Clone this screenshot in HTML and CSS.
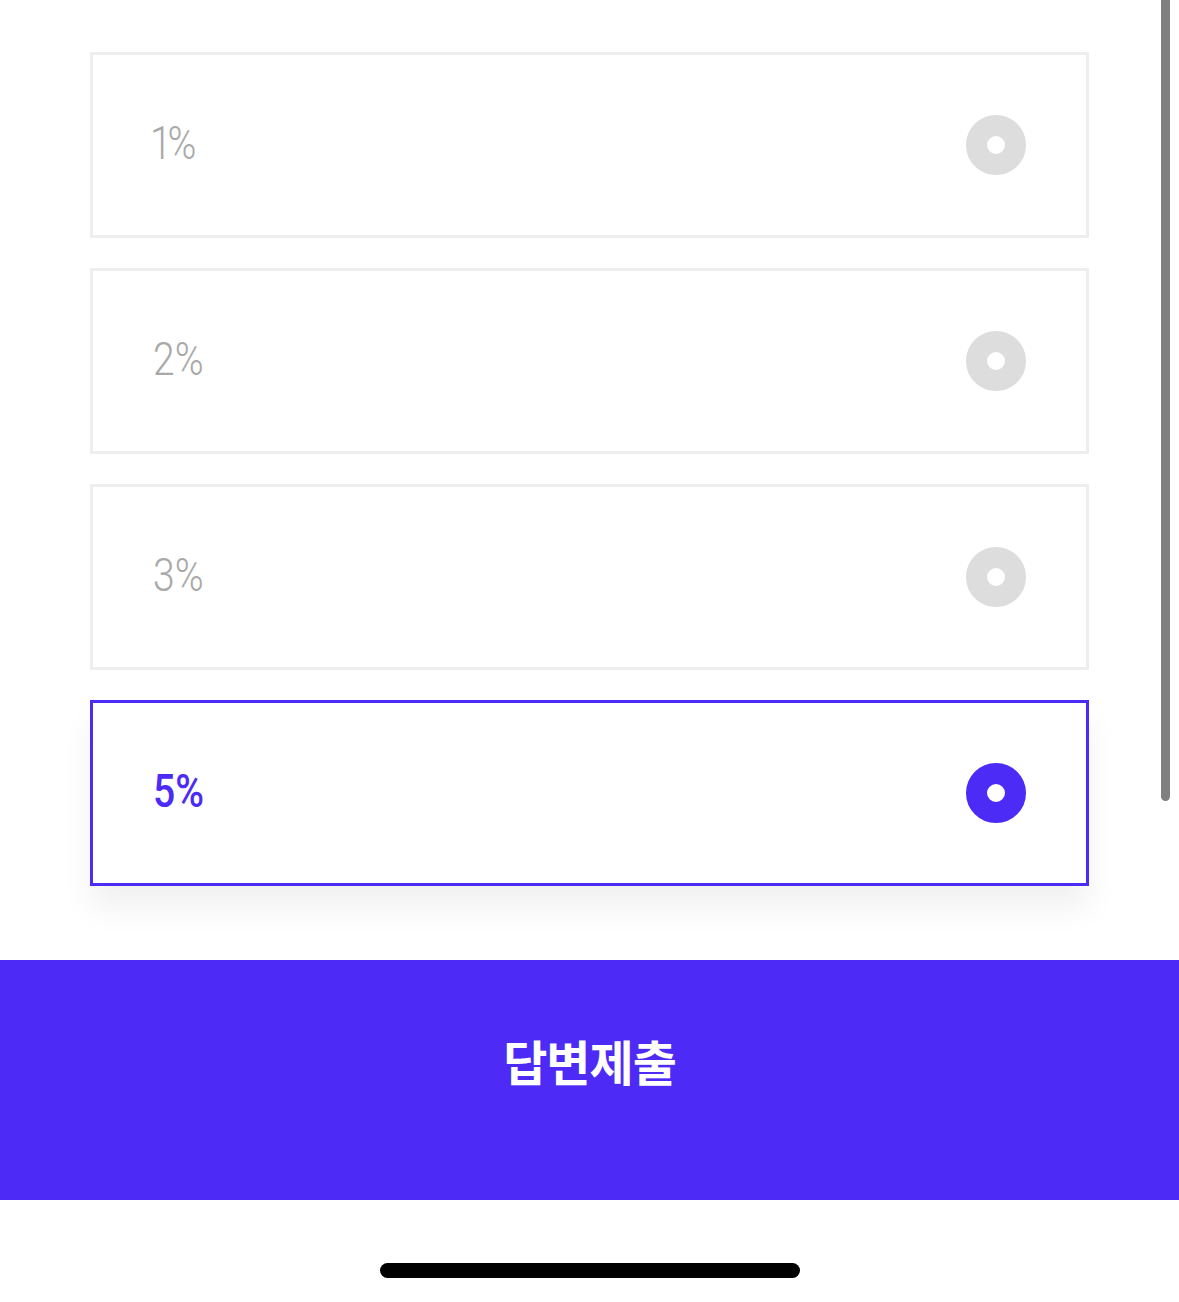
FILE: index.html
```html
<!DOCTYPE html>
<html lang="ko">
<head>
<meta charset="utf-8">
<link rel="stylesheet" href="styles.css">
</head>
<body>
<div class="screen">
  <div class="options">
    <div class="option"><span class="label label-one">1%</span><span class="radio"></span></div>
    <div class="option"><span class="label">2%</span><span class="radio"></span></div>
    <div class="option"><span class="label">3%</span><span class="radio"></span></div>
    <div class="option selected"><span class="label">5%</span><span class="radio"></span></div>
  </div>
  <div class="submit"><span class="submit-text">답변제출</span></div>
  <div class="home-area"><div class="home-indicator"></div></div>
  <div class="scrollbar"></div>
</div>
</body>
</html>
```
FILE: styles.css
```css
html, body {
  margin: 0;
  padding: 0;
  background: #ffffff;
}
.screen {
  position: relative;
  width: 1179px;
  height: 1302px;
  overflow: hidden;
  font-family: Roboto, "Noto Sans", sans-serif;
}
.options {
  display: flex;
  flex-direction: column;
  gap: 30px;
  padding: 52px 0 0 90px;
  width: 999px;
}
.option {
  box-sizing: border-box;
  height: 186px;
  border: 3px solid #eeeeee;
  background: #ffffff;
  display: flex;
  align-items: center;
  justify-content: space-between;
  padding: 0 60px 0 60px;
}
.label {
  display: inline-block;
  font-size: 46px;
  font-weight: 300;
  color: #a9a9a9;
  transform: scaleX(0.85);
  transform-origin: left center;
  line-height: 1;
  margin-top: -4px;
}
.label-one {
  letter-spacing: -5px;
  margin-left: -3px;
}
.radio {
  box-sizing: border-box;
  width: 60px;
  height: 60px;
  border-radius: 50%;
  border: 21px solid #dddddd;
  background: #ffffff;
}
.option.selected {
  border-color: #4b2bf5;
  box-shadow: 0 22px 30px rgba(0, 0, 0, 0.06);
}
.option.selected .label {
  color: #4b2bf5;
  font-weight: 500;
}
.option.selected .radio {
  border-color: #4b2bf5;
}
.submit {
  margin-top: 74px;
  height: 240px;
  background: #4d2af5;
  display: flex;
  justify-content: center;
  padding-top: 72px;
  box-sizing: border-box;
}
.submit-text {
  display: inline-block;
  color: #ffffff;
  font-family: "Noto Sans CJK KR", "Noto Sans", sans-serif;
  font-weight: 700;
  font-size: 48px;
  line-height: 56px;
  letter-spacing: -1px;
}
.home-area {
  height: 102px;
  display: flex;
  justify-content: center;
  padding-top: 63px;
  box-sizing: border-box;
}
.home-indicator {
  width: 420px;
  height: 15px;
  border-radius: 8px;
  background: #000000;
}
.scrollbar {
  position: absolute;
  top: -10px;
  left: 1161px;
  width: 9px;
  height: 811px;
  border-radius: 5px;
  background: #808080;
}
```
